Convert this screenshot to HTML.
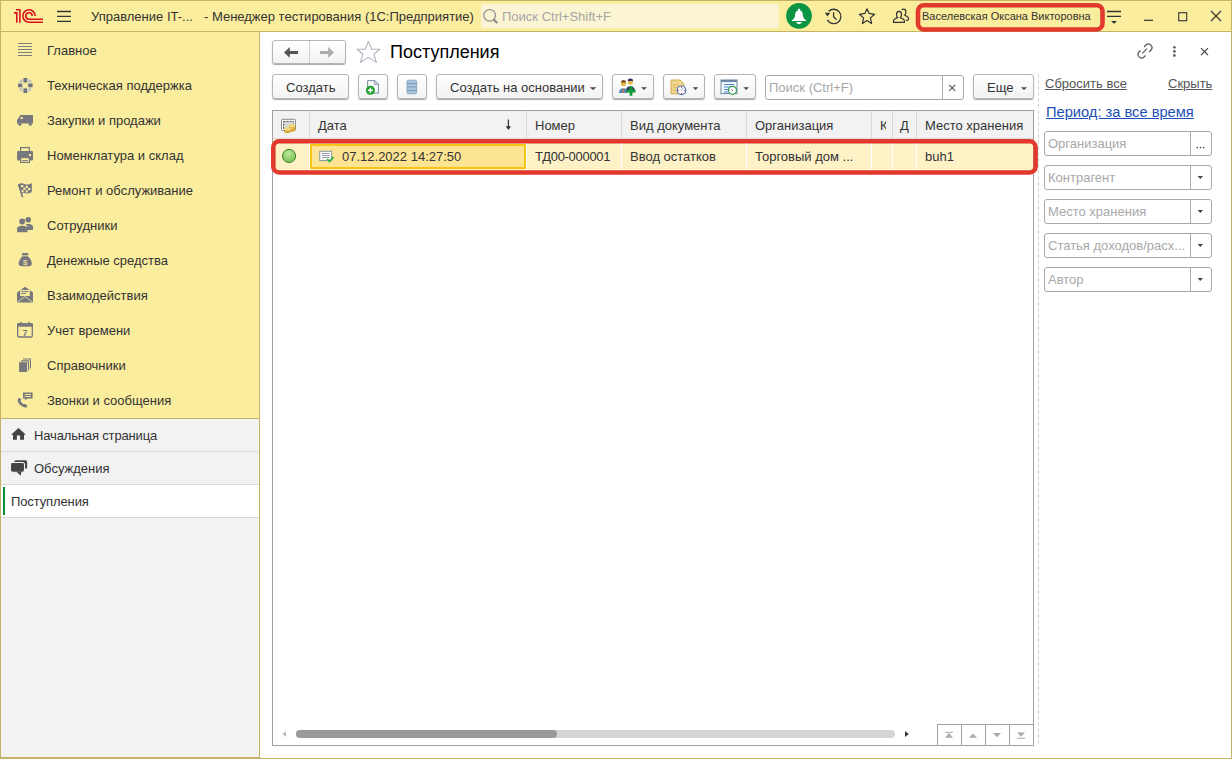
<!DOCTYPE html>
<html><head><meta charset="utf-8">
<style>
*{margin:0;padding:0;box-sizing:border-box}
html,body{width:1232px;height:759px;overflow:hidden;background:#fff}
body{position:relative;font-family:"Liberation Sans",sans-serif;font-size:13px;color:#333}
.abs{position:absolute}
.t{position:absolute;white-space:nowrap;line-height:16px}
#hdr{left:0;top:0;width:1232px;height:32px;background:#FBED9E;border-top:1px solid #C4B366;border-bottom:1px solid #C4B366}
#wl{left:0;top:0;width:1px;height:759px;background:#C4B366}
#wr{left:1231px;top:0;width:1px;height:759px;background:#C4B366}
#wb{left:0;top:758px;width:1232px;height:1px;background:#C4B366}
#wb2{left:0;top:757px;width:260px;height:1px;background:#C4B366}
#side{left:1px;top:32px;width:258px;height:386px;background:#FBED9E}
#sideb{left:259px;top:32px;width:1px;height:725px;background:#C4B366}
#sideg{left:1px;top:418px;width:258px;height:339px;background:#F2F2F2;border-top:1px solid #C2B26A}
.srow{position:absolute;left:1px;width:258px;height:33px;border-bottom:1px solid #D9D9D9}
.btn{position:absolute;height:25px;border:1px solid #B5B5B5;border-radius:3px;background:linear-gradient(#fff,#F2F2F2);box-shadow:0 1px 1px rgba(0,0,0,.35)}
.field{position:absolute;height:25px;border:1px solid #A9A9A9;border-radius:3px;background:#fff}
.ph{color:#A8A8A8}
svg{position:absolute;left:0;top:0}
</style></head><body>

<div id="hdr" class="abs"></div>
<div id="side" class="abs"></div>
<div id="sideg" class="abs"></div>
<div id="sideb" class="abs"></div>
<div id="wl" class="abs"></div>
<div id="wr" class="abs"></div>
<div id="wb" class="abs"></div>
<div id="wb2" class="abs"></div>

<!-- header content -->
<div class="t" style="left:91px;top:8.5px">Управление IT-...</div>
<div class="t" style="left:204px;top:8.5px">- Менеджер тестирования (1С:Предприятие)</div>
<div class="abs" style="left:481px;top:4px;width:298px;height:24px;background:#FCF5D3;border-radius:3px"></div>
<div class="t ph" style="left:502px;top:8.5px;color:#A5A5A5">Поиск Ctrl+Shift+F</div>
<div class="t" style="left:922px;top:8px;font-size:11px">Васелевская Оксана Викторовна</div>

<!-- sidebar items -->
<div class="t" style="left:47px;top:43px">Главное</div>
<div class="t" style="left:47px;top:78px">Техническая поддержка</div>
<div class="t" style="left:47px;top:113px">Закупки и продажи</div>
<div class="t" style="left:47px;top:148px">Номенклатура и склад</div>
<div class="t" style="left:47px;top:183px">Ремонт и обслуживание</div>
<div class="t" style="left:47px;top:218px">Сотрудники</div>
<div class="t" style="left:47px;top:253px">Денежные средства</div>
<div class="t" style="left:47px;top:288px">Взаимодействия</div>
<div class="t" style="left:47px;top:323px">Учет времени</div>
<div class="t" style="left:47px;top:358px">Справочники</div>
<div class="t" style="left:47px;top:393px">Звонки и сообщения</div>

<div class="srow" style="top:419px"></div>
<div class="srow" style="top:452px"></div>
<div class="srow" style="top:485px;background:#fff"></div>
<div class="abs" style="left:3px;top:487px;width:2px;height:28px;background:#0B8A3E"></div>
<div class="t" style="left:34px;top:428px;letter-spacing:-0.15px">Начальная страница</div>
<div class="t" style="left:34px;top:461px">Обсуждения</div>
<div class="t" style="left:11px;top:494px;letter-spacing:-0.12px">Поступления</div>

<!-- form header -->
<div class="btn" style="left:272px;top:40px;width:74px;height:24px"></div>
<div class="abs" style="left:309px;top:41px;width:1px;height:22px;background:#D0D0D0"></div>
<div class="t" style="left:390px;top:41px;font-size:18px;line-height:22px;color:#000">Поступления</div>

<!-- toolbar -->
<div class="btn" style="left:272px;top:74px;width:77px"></div>
<div class="t" style="left:286px;top:79.5px">Создать</div>
<div class="btn" style="left:358px;top:74px;width:30px"></div>
<div class="btn" style="left:397px;top:74px;width:30px"></div>
<div class="btn" style="left:436px;top:74px;width:167px"></div>
<div class="t" style="left:450px;top:79.5px">Создать на основании</div>
<div class="btn" style="left:612px;top:74px;width:42px"></div>
<div class="btn" style="left:663px;top:74px;width:42px"></div>
<div class="btn" style="left:714px;top:74px;width:42px"></div>
<div class="field" style="left:765px;top:75px;width:199px;height:25px"></div>
<div class="abs" style="left:942px;top:76px;width:1px;height:23px;background:#A9A9A9"></div>
<div class="t ph" style="left:769px;top:79.5px">Поиск (Ctrl+F)</div>
<div class="btn" style="left:973px;top:74px;width:61px"></div>
<div class="t" style="left:987px;top:79.5px">Еще</div>

<!-- table -->
<div class="abs" style="left:272px;top:110px;width:762px;height:636px;border:1px solid #A0A0A0;background:#fff"></div>
<div class="abs" style="left:273px;top:111px;width:760px;height:28px;background:#F2F2F2;border-bottom:1px solid #DADADA"></div>
<div class="abs" style="left:309px;top:111px;width:1px;height:27px;background:#D9D9D9"></div>
<div class="abs" style="left:526px;top:111px;width:1px;height:27px;background:#D9D9D9"></div>
<div class="abs" style="left:621px;top:111px;width:1px;height:27px;background:#D9D9D9"></div>
<div class="abs" style="left:746px;top:111px;width:1px;height:27px;background:#D9D9D9"></div>
<div class="abs" style="left:871px;top:111px;width:1px;height:27px;background:#D9D9D9"></div>
<div class="abs" style="left:892px;top:111px;width:1px;height:27px;background:#D9D9D9"></div>
<div class="abs" style="left:916px;top:111px;width:1px;height:27px;background:#D9D9D9"></div>
<div class="t" style="left:318px;top:118px">Дата</div>
<div class="t" style="left:535px;top:118px">Номер</div>
<div class="t" style="left:630px;top:118px">Вид документа</div>
<div class="t" style="left:755px;top:118px">Организация</div>
<div class="abs" style="left:872px;top:111px;width:14px;height:27px;overflow:hidden"><div class="t" style="left:8px;top:7px">К</div></div>
<div class="t" style="left:900px;top:118px">Д</div>
<div class="t" style="left:925px;top:118px">Место хранения</div>

<div class="abs" style="left:273px;top:139px;width:760px;height:32px;background:#FDF1C6"></div>
<div class="abs" style="left:309px;top:139px;width:1px;height:32px;background:#fff"></div>
<div class="abs" style="left:526px;top:139px;width:1px;height:32px;background:#fff"></div>
<div class="abs" style="left:621px;top:139px;width:1px;height:32px;background:#fff"></div>
<div class="abs" style="left:746px;top:139px;width:1px;height:32px;background:#fff"></div>
<div class="abs" style="left:871px;top:139px;width:1px;height:32px;background:#fff"></div>
<div class="abs" style="left:892px;top:139px;width:1px;height:32px;background:#fff"></div>
<div class="abs" style="left:916px;top:139px;width:1px;height:32px;background:#fff"></div>
<div class="abs" style="left:310px;top:143.5px;width:216px;height:25.5px;background:#FDE492;border:2px solid #F7C614"></div>
<div class="t" style="left:342px;top:149px">07.12.2022 14:27:50</div>
<div class="t" style="left:535px;top:149px;letter-spacing:-0.3px">ТД00-000001</div>
<div class="t" style="left:630px;top:149px">Ввод остатков</div>
<div class="t" style="left:755px;top:149px">Торговый дом ...</div>
<div class="t" style="left:925px;top:149px">buh1</div>

<!-- bottom nav -->
<div class="abs" style="left:937px;top:724px;width:97px;height:22px;border:1px solid #A0A0A0;background:#fff"></div>
<div class="abs" style="left:961px;top:724px;width:1px;height:22px;background:#A0A0A0"></div>
<div class="abs" style="left:985px;top:724px;width:1px;height:22px;background:#A0A0A0"></div>
<div class="abs" style="left:1009px;top:724px;width:1px;height:22px;background:#A0A0A0"></div>
<div class="abs" style="left:296px;top:730px;width:599px;height:8px;border-radius:4px;background:#D5D5D5"></div>
<div class="abs" style="left:296px;top:730px;width:261px;height:8px;border-radius:4px;background:#999"></div>

<!-- right panel -->
<div class="abs" style="left:1038px;top:74px;width:1px;height:670px;background:repeating-linear-gradient(to bottom,#D6D6D6 0 4px,transparent 4px 6px)"></div>
<div class="t" style="left:1045px;top:76px;color:#555;text-decoration:underline">Сбросить все</div>
<div class="t" style="left:1168px;top:76px;color:#555;text-decoration:underline">Скрыть</div>
<div class="t" style="left:1046px;top:102.5px;font-size:14.67px;line-height:18px;color:#1C4FB8;text-decoration:underline">Период: за все время</div>
<div class="field" style="left:1044px;top:131px;width:168px"></div>
<div class="field" style="left:1044px;top:165px;width:168px"></div>
<div class="field" style="left:1044px;top:199px;width:168px"></div>
<div class="field" style="left:1044px;top:233px;width:168px"></div>
<div class="field" style="left:1044px;top:267px;width:168px"></div>
<div class="abs" style="left:1190px;top:132px;width:1px;height:23px;background:#A9A9A9"></div>
<div class="abs" style="left:1190px;top:166px;width:1px;height:23px;background:#A9A9A9"></div>
<div class="abs" style="left:1190px;top:200px;width:1px;height:23px;background:#A9A9A9"></div>
<div class="abs" style="left:1190px;top:234px;width:1px;height:23px;background:#A9A9A9"></div>
<div class="abs" style="left:1190px;top:268px;width:1px;height:23px;background:#A9A9A9"></div>
<div class="t ph" style="left:1048px;top:136px">Организация</div>
<div class="t ph" style="left:1048px;top:170px">Контрагент</div>
<div class="t ph" style="left:1048px;top:204px">Место хранения</div>
<div class="t ph" style="left:1048px;top:238px">Статья доходов/расх...</div>
<div class="t ph" style="left:1048px;top:272px">Автор</div>

<svg width="1232" height="759" viewBox="0 0 1232 759">
<!-- 1C logo -->
<g fill="none" stroke="#D7141B" stroke-width="1.6">
<path d="M16 9.8H19.9V22.8M14 12.9H16.8V22.8"/>
<path d="M35.2 16A6.2 6.2 0 1 0 29 22.2H43"/>
<path d="M32.2 16A3.2 3.2 0 1 0 29 19.2H43"/>
</g>
<!-- hamburger -->
<path d="M57 11.5H71M57 16.4H71M57 21.3H71" stroke="#333" stroke-width="1.3"/>
<!-- search magnifier -->
<circle cx="489.6" cy="15.3" r="5.8" fill="none" stroke="#8A8A8A" stroke-width="1.2"/>
<path d="M493.8 19.5L497.3 23" stroke="#8A8A8A" stroke-width="2.2"/>
<!-- bell -->
<circle cx="799" cy="15.8" r="12.9" fill="#0A9443"/>
<g fill="#fff">
<circle cx="799" cy="10" r="1.3"/>
<path d="M795.6 12.2Q796 10.6 799 10.6Q802 10.6 802.4 12.2L803.1 16.6Q803.6 18.8 806.1 20.2V21H791.9V20.2Q794.4 18.8 794.9 16.6Z"/>
<path d="M796 22.1H802Q801 24.2 799 24.2Q797 24.2 796 22.1Z"/>
</g>
<!-- history -->
<g fill="none" stroke="#333" stroke-width="1.3">
<path d="M827.4 19.9A7.2 7.2 0 1 0 828.6 11.4"/>
<path d="M833.6 12.3V16.8L836.6 19.8"/>
</g>
<path d="M824.8 12.8H830.2L827.4 16.4Z" fill="#333"/>
<!-- star header -->
<path d="M867 8.8L869 13.3L874.6 14.3L870.4 17.9L871.6 23.5L867 20.5L862.4 23.5L863.6 17.9L859.4 14.3L865 13.3Z" fill="none" stroke="#333" stroke-width="1.2" stroke-linejoin="round"/>
<!-- users -->
<g fill="none" stroke="#333" stroke-width="1.2">
<path d="M899 11.4C897.3 11.4 896.5 12.8 896.5 14.5C896.5 16 897 17 897.6 17.6L894.8 19C893.8 19.6 893.5 20.3 893.5 21V22.3H904.4V21C904.4 20.3 904.1 19.6 903.1 19L900.3 17.6C900.9 17 901.5 16 901.5 14.5C901.5 12.8 900.7 11.4 899 11.4Z"/>
<path d="M901.6 10.2C902.1 9.5 902.8 9.2 903.6 9.2C905.1 9.2 905.9 10.5 905.9 12C905.9 13.5 905.4 14.5 904.7 15.2L907.1 16.5C908.3 17.2 908.6 17.8 908.6 18.8C908.6 19.8 908.1 20.3 907.1 20.3H906"/>
</g>
<!-- filter menu -->
<path d="M1107 11.5H1121M1107 16.4H1121" stroke="#333" stroke-width="1.3"/>
<path d="M1111 21H1117L1114 23.8Z" fill="#333"/>
<!-- window controls -->
<path d="M1144 20.3H1153" stroke="#333" stroke-width="1.2"/>
<rect x="1178.7" y="12.7" width="8" height="8" fill="none" stroke="#333" stroke-width="1.1"/>
<path d="M1211 11L1221 21M1221 11L1211 21" stroke="#333" stroke-width="1.1"/>

<!-- red user box -->
<rect x="918" y="5.2" width="184.5" height="24.3" rx="6" fill="none" stroke="#E2392F" stroke-width="4.6"/>

<!-- sidebar icons -->
<path d="M18 43.5H32M18 46.5H32M18 49.5H32M18 52.5H32M18 55.5H32" stroke="#7D7F87" stroke-width="1.1"/>
<g>
<circle cx="25.3" cy="85.4" r="7.2" fill="#BFC0C8"/>
<rect x="23.3" y="78" width="4" height="5" fill="#70737F"/>
<rect x="23.3" y="88" width="4" height="5" fill="#70737F"/>
<rect x="18" y="83.4" width="4.6" height="4" fill="#70737F"/>
<rect x="28" y="83.4" width="4.6" height="4" fill="#70737F"/>
<path d="M22.8 77V94M27.8 77V94M17 82.9H34M17 87.9H34" stroke="#FBED9E" stroke-width="0.9"/>
<rect x="23.2" y="83.3" width="4.2" height="4.2" fill="#FBED9E"/>
</g>
<g fill="#77787D">
<path d="M17 120L20.5 115H33V123.6H17Z"/>
<circle cx="19.8" cy="124.2" r="1.5"/><circle cx="30.3" cy="124.2" r="1.5"/>
</g>
<rect x="20.5" y="117" width="2.3" height="2" fill="#FBED9E"/>
<g fill="#77787D">
<path d="M20 147H30V151H28.8V148.2H21.2V151H20Z"/>
<rect x="17.1" y="151" width="15.9" height="9.6" rx="1"/>
<path d="M20 157H30V163H20Z"/>
</g>
<rect x="29" y="154" width="2" height="2" fill="#FBED9E"/>
<rect x="21.2" y="158.2" width="7.6" height="3.6" fill="#FBED9E"/>
<rect x="22.2" y="160" width="5.6" height="0.9" fill="#77787D"/>
<!-- flag -->
<g fill="#77787D">
<path d="M18 184.5Q21 182.5 24.5 184Q28 185.5 31.8 183V192Q28 194.5 24.5 193Q21.5 191.8 20.5 193L18 184.5Z"/>
<path d="M18.8 184.5L22.6 197.2" stroke="#77787D" stroke-width="1.6"/>
</g>
<g fill="#FBED9E">
<rect x="21" y="185" width="2.3" height="2.2"/><rect x="25.6" y="185.8" width="2.3" height="2.2"/>
<rect x="23.3" y="187.7" width="2.3" height="2.2"/><rect x="27.9" y="188" width="2.3" height="2.2"/>
<rect x="21.5" y="190" width="2" height="2"/><rect x="25.6" y="190.5" width="2.3" height="2"/>
</g>
<!-- people -->
<g fill="#77787D">
<circle cx="28.2" cy="219.8" r="2.8"/>
<path d="M26 224H30.5L33 226V230H27Z"/>
<circle cx="22.2" cy="221.5" r="3"/>
<path d="M17.1 227.5L20.5 225.8H24L27.5 227.5V232.2H17.1Z"/>
</g>
<path d="M25.3 221V226M26 226.2L27.8 226.2" stroke="#FBED9E" stroke-width="0.7"/>
<!-- money bag -->
<g fill="#77787D">
<rect x="22.1" y="253" width="6.1" height="2.4"/>
<path d="M22.5 256.3H27.8Q31.8 260 31.8 263.5Q31.8 266.2 29 266.2H21.5Q18.7 266.2 18.7 263.5Q18.7 260 22.5 256.3Z"/>
</g>
<text x="25.2" y="264.5" font-family="Liberation Sans" font-size="8" fill="#FBED9E" text-anchor="middle">$</text>
<!-- envelope -->
<g fill="#77787D">
<path d="M17 292.5L25 286.7L33 292.5V302.5H17Z"/>
</g>
<rect x="20.2" y="290" width="9.6" height="6" fill="#FBED9E"/>
<path d="M21.3 291.6H28.7M21.3 293.6H26" stroke="#77787D" stroke-width="1"/>
<path d="M17.5 302L25 296.5L32.5 302" stroke="#FBED9E" stroke-width="0.8" fill="none"/>
<!-- calendar -->
<g fill="none" stroke="#77787D" stroke-width="1.3">
<rect x="17.7" y="323.8" width="14.6" height="13.2" rx="1.2"/>
</g>
<rect x="17.2" y="323.2" width="15.6" height="3.5" fill="#77787D"/>
<path d="M21 321.8V325M29 321.8V325" stroke="#77787D" stroke-width="1.4"/>
<text x="25" y="335.7" font-family="Liberation Sans" font-weight="bold" font-size="9" fill="#77787D" text-anchor="middle">7</text>
<!-- docs -->
<rect x="19.1" y="362.2" width="7.9" height="9.8" fill="#77787D"/>
<path d="M21 360.9H28.4V370.5M23 359H30.4V368.5" fill="none" stroke="#77787D" stroke-width="1.1"/>
<!-- phone + msg -->
<g fill="#77787D">
<path d="M19.2 397.8Q17.2 399 17.8 401.5Q19.8 406 24.8 407.4Q26.8 407.8 27.6 406.2L25.4 403.8Q24.4 404.6 23.4 404.1Q21.6 403 20.8 401.2Q20.5 400.2 21.4 399.6Z"/>
<path d="M23 392.6H32.6V398.6H27.2L25.2 400.6V398.6H23Z"/>
</g>
<path d="M24.7 394.5H30.9M24.7 396.5H30.9" stroke="#FBED9E" stroke-width="0.9"/>
<!-- home -->
<path d="M18.5 427.9L11 434.7H13V439.7H16.9V435.4H20.1V439.7H24V434.7H25.9Z" fill="#444"/>
<!-- chat -->
<rect x="14.3" y="460.2" width="12.8" height="8.6" rx="1.6" fill="#444"/>
<rect x="10.5" y="462.5" width="14" height="9.8" rx="2" fill="#444" stroke="#F2F2F2" stroke-width="1.1"/>
<path d="M16.3 471.5H21.3L20.8 475.7Z" fill="#444"/>

<!-- nav arrows -->
<path d="M284 52.4L289.8 47.1V51H298V53.9H289.8V57.8Z" fill="#555"/>
<path d="M334 52.4L328.2 47.1V51H320V53.9H328.2V57.8Z" fill="#AAA"/>
<!-- form star -->
<path d="M368.4 41.5L371.7 49.3H379.9L373.8 54.2L376.4 62.4L368.4 57.4L360.4 62.4L363 54.2L357 49.3H365.1Z" fill="none" stroke="#AEB4BE" stroke-width="1.1" stroke-linejoin="round"/>

<!-- toolbar icons -->
<path d="M367.6 80.6H375L378.4 84V93.2H367.6Z" fill="#F7F7F7" stroke="#7890A8" stroke-width="1"/>
<path d="M374.8 80.6V84.2H378.4" fill="none" stroke="#7890A8" stroke-width="1"/>
<circle cx="370.4" cy="90.3" r="4.5" fill="#1F9F30"/>
<path d="M367.8 90.3H373M370.4 87.7V92.9" stroke="#fff" stroke-width="1.4"/>
<rect x="407" y="80.2" width="9.7" height="13.6" rx="1.5" fill="#A9C5DD" stroke="#7A9AB6" stroke-width="0.8"/>
<path d="M407.5 83.6H416.2M407.5 87H416.2M407.5 90.4H416.2" stroke="#7A9AB6" stroke-width="1"/>
<!-- people add -->
<circle cx="623.5" cy="83.5" r="2.6" fill="#E4B94B"/>
<path d="M621 82.5Q621 80 623.5 80Q626 80 626 82.5" fill="#7A4A1A"/>
<path d="M619 93Q619 88.5 623.5 88.3Q628 88.5 628 93Z" fill="#5F86AE"/>
<path d="M623.5 88.5V93" stroke="#E07050" stroke-width="1"/>
<circle cx="630.4" cy="82" r="2.6" fill="#E4B94B"/>
<path d="M627.8 81Q627.8 78.6 630.4 78.6Q633 78.6 633 81" fill="#2E3566"/>
<path d="M626 91Q626 86.5 630.4 86.3Q634.8 86.5 634.8 91Z" fill="#2E3566"/>
<path d="M631 86.3V95.7M626.5 91H635.5" stroke="#119A3A" stroke-width="2.8"/>
<!-- doc clock -->
<path d="M671 80H680L683.8 83.8V93.8H671Z" fill="#F0D68A" stroke="#D0A845" stroke-width="0.9"/>
<path d="M673 85H679M673 87.5H678M673 90H677" stroke="#D6B460" stroke-width="0.8"/>
<circle cx="681.5" cy="90.3" r="4.3" fill="#fff" stroke="#4A7CC0" stroke-width="1.2"/>
<g fill="#E0302A"><circle cx="681.5" cy="87.2" r="0.6"/><circle cx="681.5" cy="93.4" r="0.6"/><circle cx="678.4" cy="90.3" r="0.6"/><circle cx="684.6" cy="90.3" r="0.6"/></g>
<path d="M681.5 90.3L683.2 88.2" stroke="#4A7CC0" stroke-width="0.8"/>
<!-- list clock -->
<rect x="721" y="80" width="16" height="13.6" fill="#F4F8FC" stroke="#6D87A3" stroke-width="1"/>
<rect x="721" y="80" width="16" height="2" fill="#6D87A3"/>
<path d="M724 84.5H734M724 87H731M724 89.5H729M724 92H728" stroke="#4A88D8" stroke-width="1"/>
<circle cx="732.5" cy="90.3" r="4" fill="#fff" stroke="#3C9A56" stroke-width="1.3"/>
<path d="M731.3 89.2L733 91" stroke="#555" stroke-width="0.8"/>
<!-- dropdown arrows toolbar -->
<g fill="#444">
<path d="M589.7 87.2H596.3L593 90Z"/>
<path d="M641.2 87.2H646.8L644 90Z"/>
<path d="M692.8 87.2H698.2L695.5 90Z"/>
<path d="M743.4 87.2H749L746.2 90Z"/>
<path d="M1021 87.2H1027L1024 90Z"/>
</g>
<!-- search clear -->
<path d="M949.2 84.8L955.2 90.8M955.2 84.8L949.2 90.8" stroke="#555" stroke-width="1.1"/>

<!-- table header icon -->
<rect x="281.5" y="119.3" width="14" height="11.2" rx="1" fill="#fff" stroke="#888" stroke-width="1"/>
<rect x="283.6" y="121.4" width="9.8" height="7.4" fill="#D8D8D8" stroke="#555" stroke-width="1" stroke-dasharray="2 1"/>
<ellipse cx="292" cy="129.5" rx="3.4" ry="2.2" fill="#D6A630"/>
<ellipse cx="292" cy="127.5" rx="3.4" ry="2.2" fill="#E2B640"/>
<ellipse cx="292" cy="125.5" rx="3.4" ry="1.8" fill="#F2D780"/>
<ellipse cx="287.5" cy="131" rx="3.4" ry="2" fill="#D6A630"/>
<ellipse cx="287.5" cy="129" rx="3.4" ry="1.8" fill="#F2D780"/>
<!-- sort arrow -->
<path d="M508.4 119.5V129" stroke="#333" stroke-width="1.2"/>
<path d="M505.8 126.3H511L508.4 130Z" fill="#333"/>
<!-- green circle -->
<defs><radialGradient id="gg" cx="0.45" cy="0.3" r="0.7"><stop offset="0" stop-color="#B9E69A"/><stop offset="1" stop-color="#78C155"/></radialGradient></defs>
<circle cx="289.05" cy="155.95" r="6.6" fill="url(#gg)" stroke="#3F7F2A" stroke-width="1"/>
<!-- doc check -->
<rect x="319.7" y="151.3" width="12" height="9.3" fill="#F8F8F8" stroke="#8A96A3" stroke-width="1"/>
<path d="M322 153.5H329.4M322 155.5H329.4M322 157.5H329.4" stroke="#8A96A3" stroke-width="0.9"/>
<path d="M327.2 159L329.4 161.5L333.5 157" fill="none" stroke="#1DB43A" stroke-width="1.8"/>

<!-- red row box -->
<rect x="273.3" y="141.3" width="762.3" height="31.2" rx="6" fill="none" stroke="#E2392F" stroke-width="4.6"/>

<!-- form header icons -->
<g fill="none" stroke="#555" stroke-width="1.2">
<path d="M1144 47L1146 45A3.54 3.54 0 0 1 1151 50L1149 52"/>
<path d="M1145.5 55.5L1144 57A3.54 3.54 0 0 1 1139 52L1140.5 50.5"/>
<path d="M1142.3 53.3L1147 48.6"/>
</g>
<g fill="#666"><circle cx="1174.4" cy="47.3" r="1.4"/><circle cx="1174.4" cy="51.4" r="1.4"/><circle cx="1174.4" cy="55.5" r="1.4"/></g>
<path d="M1201 48.2L1208 55M1208 48.2L1201 55" stroke="#444" stroke-width="1.1"/>

<!-- filter field buttons -->
<g fill="#444">
<circle cx="1197.3" cy="147.6" r="0.8"/><circle cx="1200.5" cy="147.6" r="0.8"/><circle cx="1203.6" cy="147.6" r="0.8"/>
<path d="M1197.6 176H1203L1200.3 179Z"/>
<path d="M1197.6 210H1203L1200.3 213Z"/>
<path d="M1197.6 244H1203L1200.3 247Z"/>
<path d="M1197.6 278H1203L1200.3 281Z"/>
</g>

<!-- scroll arrows -->
<path d="M286 731V737L282.5 734Z" fill="#BBB"/>
<path d="M905 731V737L908.8 734Z" fill="#333"/>
<!-- bottom nav icons -->
<g fill="#AAA">
<path d="M945 737.7H953L949 733Z"/><rect x="945" y="731.8" width="8" height="1"/>
<path d="M969 737.7H977L973 733.5Z"/>
<path d="M993 733H1001L997 737.2Z"/>
<path d="M1017 732.5H1025L1021 736.7Z"/><rect x="1017" y="737.8" width="8" height="1"/>
</g>
</svg>
</body></html>
